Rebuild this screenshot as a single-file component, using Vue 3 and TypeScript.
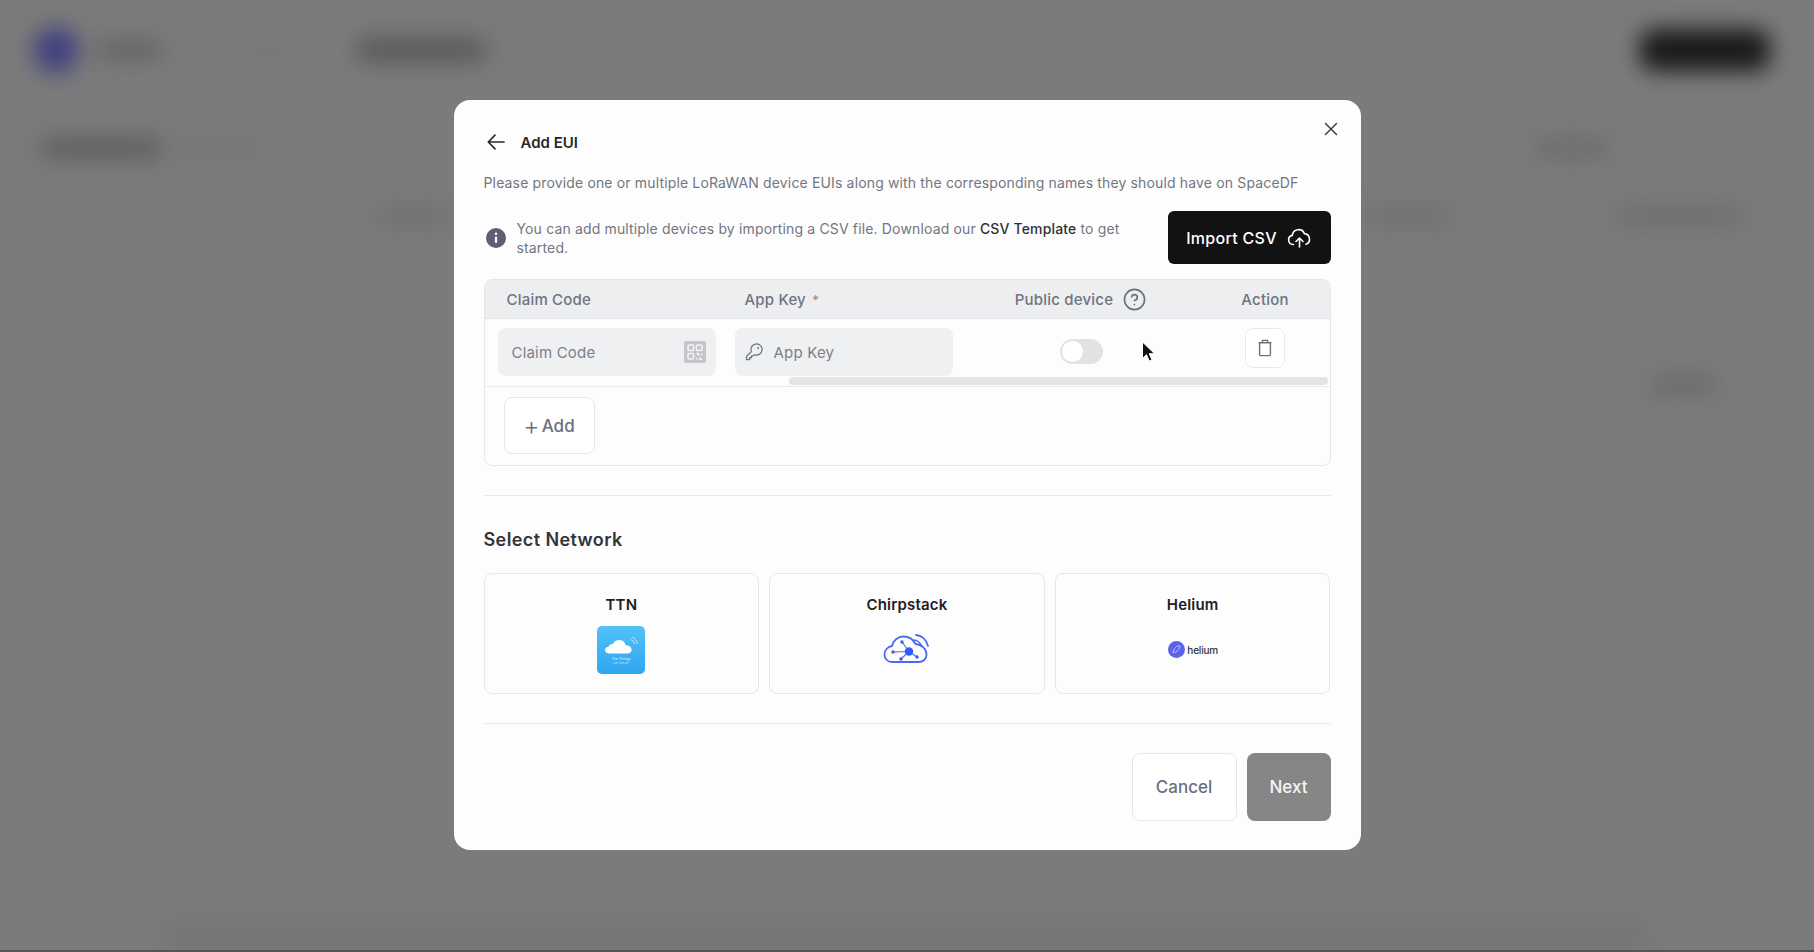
<script setup lang="ts">
interface Network {
  name: string
  kind: 'ttn' | 'chirp' | 'helium'
}
const networks: Network[] = [
  { name: 'TTN', kind: 'ttn' },
  { name: 'Chirpstack', kind: 'chirp' },
  { name: 'Helium', kind: 'helium' },
]
</script>

<template>
  <div class="page">
    <div class="shell" aria-hidden="true">
      <div class="row r1">
        <span class="blob logo"></span>
        <span class="blob brand"></span>
        <span class="blob nav-faint"></span>
        <span class="blob nav"></span>
        <span class="grow"></span>
        <span class="blob cta"></span>
      </div>
      <div class="row r2">
        <span class="blob tab"></span>
        <span class="blob tab-faint"></span>
        <span class="grow"></span>
        <span class="blob side"></span>
        <span class="blob side-end"></span>
      </div>
      <div class="row r3">
        <span class="blob f1"></span>
        <span class="grow"></span>
        <span class="blob f2"></span>
        <span class="blob f3"></span>
      </div>
      <div class="row r4">
        <span class="grow"></span>
        <span class="blob f4"></span>
      </div>
      <div class="panel"></div>
    </div>
    <div class="bottom-strip"></div>

    <div class="overlay">
      <section class="modal">
        <button class="close" aria-label="Close">
          <svg width="18" height="18" viewBox="0 0 18 18" fill="none" stroke="#3c3f47" stroke-width="1.5" stroke-linecap="round">
            <path d="M3.500 3.500l11 11M14.500 3.500l-11 11" />
          </svg>
        </button>

        <header class="head">
          <svg class="back" width="20" height="20" viewBox="0 0 20 20" fill="none" stroke="#25272c" stroke-width="1.7" stroke-linecap="round" stroke-linejoin="round">
            <path d="M18 10H2.500M9 3.200L2.300 10 9 16.800" />
          </svg>
          <h2>Add EUI</h2>
        </header>

        <p class="desc">Please provide one or multiple LoRaWAN device EUIs along with the corresponding names they should have on SpaceDF</p>

        <div class="info">
          <svg class="info-icon" width="20" height="20" viewBox="0 0 20 20">
            <circle cx="10" cy="10" r="10" fill="#5d6074" />
            <circle cx="10" cy="5.800" r="1.300" fill="#fff" />
            <rect x="8.900" y="8.400" width="2.200" height="6.600" rx="1" fill="#fff" />
          </svg>
          <p>You can add multiple devices by importing a CSV file. Download our <strong>CSV Template</strong> to get<br />started.</p>
          <button class="import">
            Import CSV
            <svg width="24" height="22" viewBox="0 0 24 22" fill="none" stroke="#fff" stroke-width="1.6" stroke-linecap="round" stroke-linejoin="round">
              <path d="M6.500 17.500H6a4.600 4.600 0 0 1-.7-9.100A6.300 6.300 0 0 1 17.400 6.600a5.500 5.500 0 0 1 1.600 10.600" />
              <path d="M12.500 20v-8.500M9 14.500l3.500-3.500 3.500 3.500" />
            </svg>
          </button>
        </div>

        <div class="table">
          <div class="thead">
            <div class="th first">Claim Code</div>
            <div class="th second">App Key <i class="req">*</i></div>
            <div class="th center">
              Public device
              <svg width="23" height="23" viewBox="0 0 24 24" fill="none" stroke="#6b7080" stroke-width="1.7" stroke-linecap="round" stroke-linejoin="round">
                <circle cx="12" cy="12" r="10.500" />
                <path d="M9 9.200a3 3 0 0 1 5.900 1c0 2-2.900 2.800-2.900 2.800" />
                <path d="M12 17.400h.01" />
              </svg>
            </div>
            <div class="th action">Action</div>
          </div>

          <div class="tbody">
            <div class="td first">
              <label class="field">
                <span class="ph grow">Claim Code</span>
                <span class="qr">
                  <svg width="18" height="18" viewBox="0 0 18 18" fill="none" stroke="#f4f4f5" stroke-width="1.5">
                    <rect x="2" y="2" width="5.600" height="5.600" rx="1.200" />
                    <rect x="10.400" y="2" width="5.600" height="5.600" rx="1.200" />
                    <rect x="2" y="10.400" width="5.600" height="5.600" rx="1.200" />
                    <path d="M10.400 10.400h2v2.600M15.800 10.400v2M10.400 15.800h1.600M14 14.600v1.600h2" />
                  </svg>
                </span>
              </label>
            </div>
            <div class="td second">
              <label class="field key">
                <svg width="20" height="20" viewBox="0 0 256 256" fill="#6b7080">
                  <path d="M160,16A80.070,80.070,0,0,0,83.910,120.780L26.340,178.340A8,8,0,0,0,24,184v40a8,8,0,0,0,8,8H72a8,8,0,0,0,8-8V208H96a8,8,0,0,0,8-8V184h16a8,8,0,0,0,5.660-2.340l9.560-9.570A80,80,0,1,0,160,16Zm0,144a63.700,63.700,0,0,1-23.650-4.510,8,8,0,0,0-8.840,1.680L116.690,168H96a8,8,0,0,0-8,8v16H72a8,8,0,0,0-8,8v16H40V187.310l58.830-58.820a8,8,0,0,0,1.680-8.840A64,64,0,1,1,160,160Zm32-84a12,12,0,1,1-12-12A12,12,0,0,1,192,76Z" />
                </svg>
                <span class="ph">App Key</span>
              </label>
            </div>
            <div class="td center-cell">
              <span class="toggle"><span class="knob"></span></span>
            </div>
            <div class="td action-cell">
              <button class="trash" aria-label="Delete">
                <svg width="16" height="18" viewBox="0 0 16 18" fill="none" stroke="#6b6e79" stroke-width="1.4" stroke-linejoin="round">
                  <rect x="2.600" y="3.600" width="10.800" height="13" rx="1" />
                  <path d="M1.500 3.600h13M5.400 3.200V1.400h5.200v1.800" />
                </svg>
              </button>
            </div>
            <span class="scrollbar"></span>
          </div>

          <div class="tfoot">
            <button class="add"><span class="plus">+</span>Add</button>
          </div>
        </div>

        <hr class="divider div-a" />

        <h3>Select Network</h3>

        <div class="cards">
          <article v-for="n in networks" :key="n.name" class="card">
            <h4>{{ n.name }}</h4>
            <div class="logo-box">
              <svg v-if="n.kind === 'ttn'" width="48" height="48" viewBox="0 0 48 48">
                <defs>
                  <linearGradient id="ttnGrad" x1="0" y1="0" x2="0" y2="1">
                    <stop offset="0" stop-color="#52c2f7" />
                    <stop offset="1" stop-color="#2fa5f2" />
                  </linearGradient>
                </defs>
                <rect width="48" height="48" rx="5" fill="url(#ttnGrad)" />
                <path d="M12 27.500c-2.600 0-4-1.600-4-3.400 0-2 1.600-3.300 3.600-3.400.6-2 2.400-3 4.200-2.600 1.200-2.800 3.800-4 6.400-4 3.400 0 5.800 2.200 6.400 5.200 2.600-.2 6 1.400 6 4.400 0 2.200-1.600 3.800-4 3.800z" fill="#fff" />
                <path d="M34 13.500a5 5 0 0 1 3.500 4.500M35 11a7.500 7.500 0 0 1 5 6.500" fill="none" stroke="#bfe6fb" stroke-width="1" />
                <text x="24" y="33.500" text-anchor="middle" class="ttn-t1">The Things</text>
                <text x="24" y="37.500" text-anchor="middle" class="ttn-t2">N E T W O R K</text>
              </svg>

              <svg v-else-if="n.kind === 'chirp'" class="chirp" width="50" height="40" viewBox="0 0 50 40" fill="none" stroke="#4b6bf0" stroke-width="1.8" stroke-linecap="round" stroke-linejoin="round">
                <path d="M10 35C5.500 35 2.500 31.500 2.500 27.500 2.500 23 6 19.500 10 19 11 13.500 16 9.500 21.500 9.500 27 9.500 31.500 13 33.500 17 40 17.500 44.500 22 44.500 28 44.500 32 41 35 37 35Z" />
                <path d="M32 13C36 13.500 38.500 16 39.500 19.500" stroke-width="1.500" />
                <path d="M34 8C40 8.500 44.500 13 46 19" stroke-width="1.800" />
                <path d="M27 24.500L11 25M27 24.500L20 15M27 24.500L19 32M27 24.500L35 30" stroke-width="1.100" />
                <circle cx="27" cy="24.500" r="4.200" fill="#2f5df5" stroke="none" />
                <circle cx="11" cy="25" r="1.700" fill="#3b5be8" stroke="none" />
                <circle cx="20" cy="15" r="1.700" fill="#3b5be8" stroke="none" />
                <circle cx="19" cy="32" r="1.700" fill="#3b5be8" stroke="none" />
                <circle cx="35" cy="30" r="1.700" fill="#3b5be8" stroke="none" />
              </svg>

              <div v-else class="helium">
                <svg width="17" height="17" viewBox="0 0 17 17" fill="none">
                  <circle cx="8.500" cy="8.500" r="8.500" fill="#5b63ee" />
                  <path d="M5 11.500C6 7 8.500 4.500 12 5 11.500 8.500 9 11.500 5 11.500Z" stroke="#c7caf9" stroke-width="1" />
                </svg>
                <span>helium</span>
              </div>
            </div>
          </article>
        </div>

        <hr class="divider div-b" />

        <footer class="foot">
          <button class="cancel">Cancel</button>
          <button class="next">Next</button>
        </footer>

        <svg class="cursor" width="14" height="22" viewBox="0 0 14 22">
          <path d="M1.500 1v16.500l4-3.800 2.700 6.300 2.700-1.200-2.700-6.100h5.300z" fill="#111" stroke="#fff" stroke-width="1" />
        </svg>
      </section>
    </div>
  </div>
</template>

<style>
html,
body {
  margin: 0;
  background: #7b7b7b;
}
</style>

<style scoped>
* {
  box-sizing: border-box;
}
.page {
  position: relative;
  width: 1814px;
  height: 952px;
  overflow: hidden;
  background: #7b7b7b;
  font-family: Inter, "Liberation Sans", sans-serif;
}

/* Blurred app behind the dialog */
.shell {
  display: flex;
  flex-direction: column;
  height: 952px;
  filter: blur(11px);
}
.row {
  display: flex;
  align-items: center;
}
.grow {
  flex: 1;
}
.blob {
  display: block;
  border-radius: 14px;
}
.r1 {
  height: 100px;
  padding: 0 44px 0 33px;
}
.logo {
  width: 46px;
  height: 46px;
  border-radius: 50%;
  background: #41417f;
}
.brand {
  width: 66px;
  height: 20px;
  margin-left: 18px;
  background: #646464;
}
.nav-faint {
  width: 40px;
  height: 10px;
  margin-left: 86px;
  background: #757575;
}
.nav {
  width: 132px;
  height: 26px;
  margin-left: 66px;
  background: #5b5b5b;
}
.cta {
  width: 130px;
  height: 42px;
  background: #1a1a1a;
}
.r2 {
  height: 96px;
  padding: 0 70px 0 40px;
}
.tab {
  width: 122px;
  height: 24px;
  background: #616161;
}
.tab-faint {
  width: 90px;
  height: 12px;
  margin-left: 10px;
  background: #747474;
}
.side {
  width: 76px;
  height: 18px;
  margin-right: 84px;
  background: #6b6b6b;
}
.side-end {
  width: 50px;
  height: 8px;
  background: #767676;
}
.r3 {
  height: 40px;
  padding: 0 70px 0 375px;
}
.f1 {
  width: 75px;
  height: 16px;
  background: #6f6f6f;
}
.f2 {
  width: 90px;
  height: 16px;
  margin-right: 160px;
  background: #6f6f6f;
}
.f3 {
  width: 130px;
  height: 18px;
  background: #6d6d6d;
}
.r4 {
  height: 298px;
  padding: 0 96px 0 0;
}
.f4 {
  width: 70px;
  height: 22px;
  background: #6c6c6c;
}
.panel {
  margin: auto 165px 0;
  height: 34px;
  background: #767676;
}
.bottom-strip {
  position: absolute;
  left: 0;
  right: 0;
  bottom: 0;
  height: 2px;
  background: #555;
}

/* Dialog */
.overlay {
  position: absolute;
  inset: 0;
  padding-bottom: 2px;
  display: flex;
  align-items: center;
  justify-content: center;
}
.modal {
  position: relative;
  width: 907px;
  height: 750px;
  padding: 30px;
  background: #fdfdfd;
  border-radius: 16px;
  color: #6b6f7b;
}
button {
  font-family: inherit;
  cursor: pointer;
}
.close {
  position: absolute;
  top: 20px;
  right: 21px;
  width: 18px;
  height: 18px;
  padding: 0;
  border: 0;
  background: none;
  display: flex;
}
.head {
  display: flex;
  align-items: center;
  height: 24px;
  gap: 15px;
  padding-left: 2px;
}
.head h2 {
  margin: 0;
  font-size: 15px;
  font-weight: 600;
  color: #25272c;
}
.desc {
  margin: 19px 0 0;
  font-size: 14px;
  line-height: 20px;
  letter-spacing: 0.15px;
  color: #737680;
}
.info {
  display: flex;
  align-items: center;
  height: 53px;
  margin-top: 18px;
}
.info-icon {
  flex: none;
  margin-left: 2px;
}
.info p {
  flex: 1;
  margin: 0 38px 0 11px;
  font-size: 14px;
  line-height: 19px;
  letter-spacing: 0.15px;
  color: #737680;
}
.info strong {
  font-weight: 500;
  color: #2f3136;
}
.import {
  flex: none;
  width: 163px;
  height: 53px;
  display: flex;
  align-items: center;
  justify-content: center;
  gap: 10px;
  border: 0;
  border-radius: 6px;
  background: #121212;
  color: #fff;
  font-size: 16px;
  font-weight: 500;
  letter-spacing: 0.3px;
  padding-left: 5px;
}

/* Table */
.table {
  margin-top: 15px;
  height: 187px;
  border: 1px solid #e6e7ea;
  border-radius: 8px;
  overflow: hidden;
}
.thead {
  display: grid;
  grid-template-columns: 240px 275px 162px 1fr;
  height: 39px;
  background: #eceef0;
  border-bottom: 1px solid #e4e5e8;
  align-items: center;
  font-size: 15px;
  font-weight: 500;
  letter-spacing: 0.2px;
  color: #6f7380;
}
.th.first {
  padding-left: 22px;
}
.th.second {
  padding-left: 20px;
}
.req {
  color: #c0846f;
  font-style: normal;
  font-size: 13px;
  margin-left: 2px;
}
.th.center {
  display: flex;
  align-items: center;
  justify-content: center;
  gap: 10px;
  white-space: nowrap;
}
.th.action {
  padding-left: 39px;
  text-align: center;
}
.tbody {
  position: relative;
  display: grid;
  grid-template-columns: 240px 275px 162px 1fr;
  height: 68px;
  padding-top: 9px;
  border-bottom: 1px solid #e9eaec;
}
.td.first {
  padding-left: 13px;
}
.td.second {
  padding-left: 10px;
}
.field {
  display: flex;
  align-items: center;
  width: 218px;
  height: 48px;
  padding: 0 10px 0 14px;
  border-radius: 8px;
  background: #eff0f2;
}
.field.key {
  width: 218px;
  padding-left: 9px;
  gap: 10px;
}
.ph {
  font-size: 15px;
  letter-spacing: 0.2px;
  color: #7b7f8a;
}
.qr {
  display: flex;
  align-items: center;
  justify-content: center;
  width: 22px;
  height: 22px;
  background: #c3c5c9;
  border-radius: 2px;
}
.center-cell {
  display: flex;
  justify-content: center;
  padding-top: 11px;
  padding-left: 2px;
}
.toggle {
  display: block;
  width: 43px;
  height: 25px;
  padding: 2px;
  border-radius: 13px;
  background: #e1e2e4;
}
.knob {
  display: block;
  width: 21px;
  height: 21px;
  border-radius: 50%;
  background: #fff;
}
.action-cell {
  padding-left: 39px;
  display: flex;
  justify-content: center;
  align-items: flex-start;
}
.trash {
  display: flex;
  align-items: center;
  justify-content: center;
  width: 40px;
  height: 40px;
  padding: 0;
  background: #fff;
  border: 1px solid #e8e9eb;
  border-radius: 8px;
}
.scrollbar {
  position: absolute;
  right: 2px;
  bottom: 1px;
  width: 539px;
  height: 8px;
  border-radius: 4px;
  background: #e3e4e6;
}
.tfoot {
  padding: 10px 0 0 19px;
}
.add {
  display: flex;
  align-items: center;
  justify-content: center;
  width: 91px;
  height: 57px;
  padding: 0;
  background: #fff;
  border: 1px solid #e6e7ea;
  border-radius: 8px;
  font-size: 17px;
  font-weight: 500;
  color: #6b6f7b;
}
.plus {
  font-size: 25px;
  line-height: 22px;
  font-weight: 300;
  margin-right: 2px;
}
.divider {
  margin: 0;
  height: 1px;
  border: 0;
  background: #e9eaec;
}
.div-a {
  margin-top: 29px;
}
.div-b {
  margin-top: 29px;
}
h3 {
  margin: 30px 0 0;
  font-size: 18px;
  line-height: 28px;
  font-weight: 600;
  letter-spacing: 0.4px;
  color: #33353b;
}
.cards {
  display: grid;
  grid-template-columns: repeat(3, 1fr);
  gap: 10px;
  margin-top: 19px;
}
.card {
  height: 121px;
  padding-top: 21px;
  border: 1px solid #e6e7ea;
  border-radius: 8px;
  text-align: center;
}
.card h4 {
  margin: 0;
  font-size: 15px;
  line-height: 20px;
  font-weight: 600;
  letter-spacing: 0.2px;
  color: #1f2023;
}
.logo-box {
  display: flex;
  align-items: center;
  justify-content: center;
  height: 48px;
  margin-top: 11px;
}
.chirp {
  margin-top: -7px;
  margin-left: 1px;
}
.ttn-t1 {
  font-size: 3.600px;
  fill: #dff3fe;
  font-family: Inter, sans-serif;
}
.ttn-t2 {
  font-size: 2.200px;
  fill: #dff3fe;
  font-family: Inter, sans-serif;
}
.helium {
  display: flex;
  align-items: center;
  gap: 2px;
  margin-top: -1px;
  margin-left: 1px;
}
.helium span {
  font-size: 10px;
  font-weight: 500;
  color: #33353b;
  letter-spacing: -0.2px;
}
.foot {
  display: flex;
  justify-content: flex-end;
  gap: 10px;
  margin-top: 29px;
}
.cancel,
.next {
  height: 68px;
  border-radius: 8px;
  font-size: 17px;
  font-weight: 500;
}
.cancel {
  width: 105px;
  background: #fff;
  border: 1px solid #e6e7ea;
  color: #6b6f7b;
}
.next {
  width: 84px;
  border: 0;
  background: #868686;
  color: #f5f5f5;
}
.cursor {
  position: absolute;
  left: 687px;
  top: 241px;
}
</style>
